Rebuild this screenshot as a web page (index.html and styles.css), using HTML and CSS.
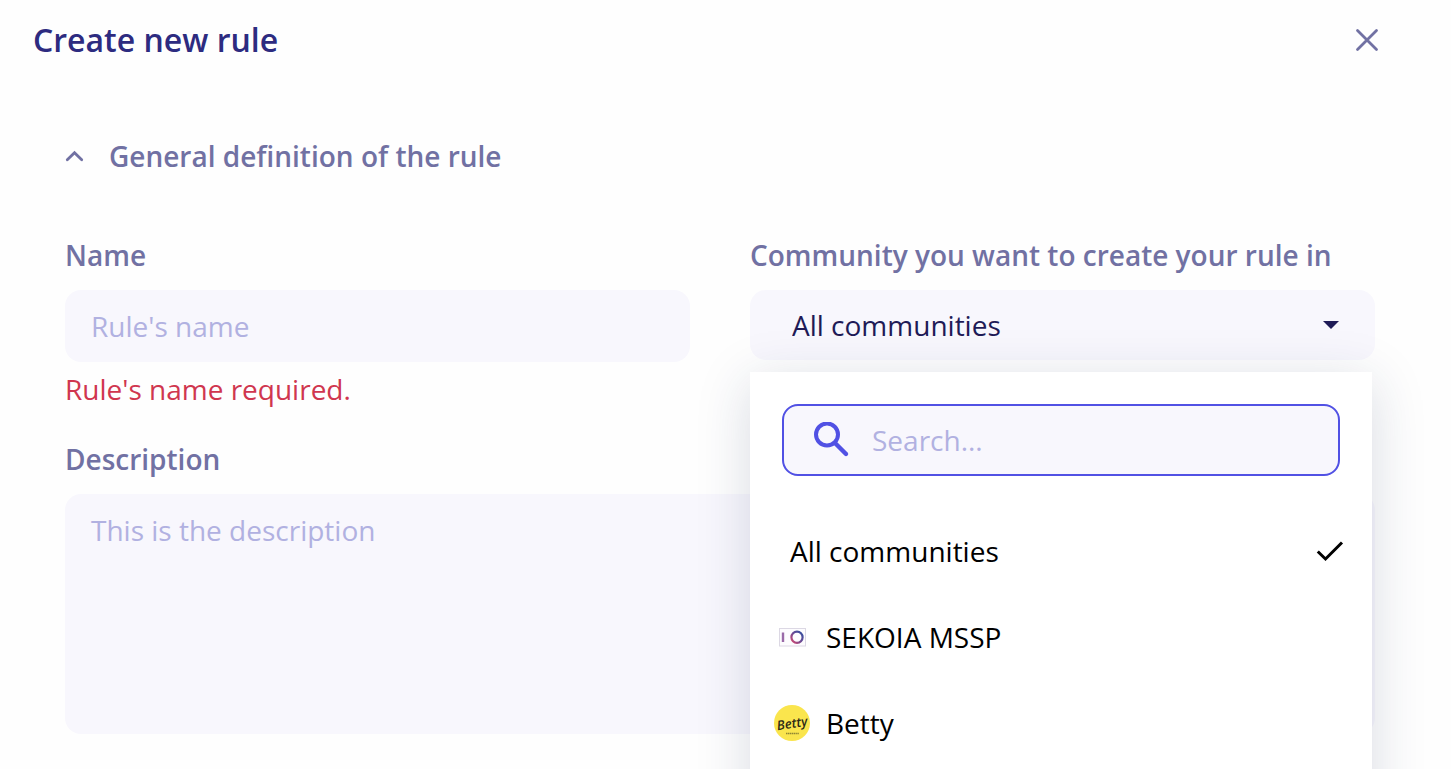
FILE: index.html
```html
<!DOCTYPE html>
<html lang="en">
<head>
<meta charset="utf-8">
<meta name="viewport" content="width=device-width, initial-scale=1">
<title>Create new rule</title>
<link rel="stylesheet" href="styles.css">
</head>
<body>
<main class="panel">
  <header class="panel-header">
    <h1 class="panel-title">Create new rule</h1>
    <button class="icon-button" type="button" aria-label="Close">
      <svg width="24" height="24" viewBox="0 0 24 24" fill="none" stroke="currentColor" stroke-width="2.8" stroke-linecap="round"><path d="M2.5 2.5 21.5 21.5M21.5 2.5 2.5 21.5"/></svg>
    </button>
  </header>

  <form class="form">
    <h2 class="section-heading">
      <button class="section-toggle" type="button" aria-expanded="true">
        <svg width="20" height="20" viewBox="0 0 20 20" fill="none" stroke="currentColor" stroke-width="2.8" stroke-linecap="round" stroke-linejoin="miter"><path d="M2.300 13.800 9.500 6.800 16.700 13.800"/></svg>
        General definition of the rule
      </button>
    </h2>

    <div class="fields">
      <div class="field">
        <label class="label" for="rule-name">Name</label>
        <input class="control" id="rule-name" type="text" placeholder="Rule's name" aria-describedby="name-error">
        <p class="error" id="name-error">Rule's name required.</p>
      </div>

      <div class="field">
        <label class="label" for="community">Community you want to create your rule in</label>
        <div class="picker">
          <select class="control picker-select" id="community">
            <option>All communities</option>
            <option>SEKOIA MSSP</option>
            <option>Betty</option>
          </select>
          <svg class="picker-arrow" width="16" height="8" viewBox="0 0 16 8" fill="currentColor"><path d="M0 0H16L8 8Z"/></svg>

          <div class="menu">
            <label class="search">
              <svg width="36" height="36" viewBox="0 0 36 36" fill="none" stroke="currentColor" stroke-width="4"><circle cx="13" cy="12.500" r="11"/><path d="M22 22 32 32" stroke-width="4.400" stroke-linecap="round"/></svg>
              <input class="search-input" type="text" placeholder="Search..." aria-label="Search communities">
            </label>
            <div class="options">
              <button class="option option-plain" type="button">
                <span class="option-name">All communities</span>
                <svg width="28" height="28" viewBox="0 0 28 28" fill="none" stroke="currentColor" stroke-width="3"><path d="M1.800 14.500 9.500 22 26 5.500"/></svg>
              </button>
              <button class="option" type="button">
                <svg width="36" height="36" viewBox="0 0 36 36" fill="none">
                  <defs>
                    <linearGradient id="ring" x1="0" y1="1" x2="1" y2="0"><stop offset="0" stop-color="#d8486f"/><stop offset=".5" stop-color="#6b4a94"/><stop offset="1" stop-color="#2f4fa0"/></linearGradient>
                  </defs>
                  <rect x="5.500" y="9.500" width="26" height="17.500" fill="#fdfcfe" stroke="#dcd8e4"/>
                  <path d="M9 13.500V23" stroke="#9a6aa8" stroke-width="2.400"/>
                  <circle cx="23" cy="18.300" r="5.600" stroke="url(#ring)" stroke-width="2.200"/>
                </svg>
                <span class="option-name">SEKOIA MSSP</span>
              </button>
              <button class="option" type="button">
                <svg width="36" height="36" viewBox="0 0 36 36" aria-hidden="true">
                  <circle cx="18" cy="18" r="18" fill="#fae54d"/>
                  <text class="betty-mark" x="18" y="23" text-anchor="middle" transform="rotate(-9 18 18)">Betty</text>
                  <path d="M12 28.500H25" fill="none" stroke="#8f8533" stroke-width="1.400" stroke-dasharray="1.400 .5"/>
                </svg>
                <span class="option-name">Betty</span>
              </button>
            </div>
          </div>
        </div>
      </div>

      <div class="field field-wide">
        <label class="label" for="description">Description</label>
        <textarea class="control description" id="description" placeholder="This is the description"></textarea>
      </div>
    </div>
  </form>
</main>
</body>
</html>
```
FILE: styles.css
```css
:root {
  --ink: #1f1b57;
  --title: #2d2b80;
  --muted: #7171a3;
  --placeholder: #b1b1e1;
  --field: #f8f7fd;
  --accent: #5151e4;
  --danger: #d0364f;
}

* {
  box-sizing: border-box;
}

body {
  margin: 0;
  background: #fefefe;
  color: var(--ink);
  font: 400 28px/40px "Open Sans", "Noto Sans", sans-serif;
}

button,
input,
select,
textarea {
  margin: 0;
  border: 0;
  background: none;
  color: inherit;
  font: inherit;
}

svg {
  display: block;
  flex: none;
}

.panel {
  height: 100vh;
  overflow: hidden;
}

.panel-header {
  display: flex;
  align-items: center;
  justify-content: space-between;
  padding: 20px 72px 0 33px;
}

.panel-title {
  margin: 0;
  color: var(--title);
  font-size: 32px;
  font-weight: 600;
  line-height: 40px;
}

.icon-button {
  padding: 0;
  color: var(--muted);
}

.form {
  padding: 76px 76px 35px 65px;
}

.section-heading {
  margin: 0 0 59px;
  font-size: 28px;
}

.section-toggle {
  display: flex;
  align-items: center;
  gap: 24px;
  padding: 0;
  color: var(--muted);
  font-weight: 600;
  line-height: 40px;
}

.fields {
  display: grid;
  grid-template-columns: 1fr 1fr;
  gap: 30px 60px;
}

.field {
  display: flex;
  flex-direction: column;
  min-width: 0;
}

.field-wide {
  grid-column: 1 / -1;
}

.label {
  margin-bottom: 15px;
  color: var(--muted);
  font-weight: 600;
}

.control {
  width: 100%;
  padding: 16px 26px;
  border-radius: 16px;
  background: var(--field);
}

::placeholder {
  color: var(--placeholder);
  opacity: 1;
}

.error {
  margin: 7px 0 0;
  color: var(--danger);
}

.description {
  display: block;
  height: 240px;
  resize: none;
}

.picker {
  position: relative;
}

.picker-select {
  display: block;
  height: 70px;
  padding: 0 42px;
  appearance: none;
}

.picker-arrow {
  position: absolute;
  top: 31px;
  right: 36px;
  pointer-events: none;
}

.menu {
  position: absolute;
  z-index: 1;
  top: calc(100% + 12px);
  left: 0;
  right: 3px;
  padding: 32px 0 60px;
  background: #fff;
  color: #000;
  box-shadow: 0 10px 50px rgba(31, 50, 90, 0.17);
}

.search {
  display: flex;
  align-items: center;
  gap: 22px;
  height: 72px;
  margin: 0 32px 32px;
  padding: 0 30px;
  border: 2px solid var(--accent);
  border-radius: 16px;
  background: var(--field);
  color: var(--accent);
}

.search-input {
  flex: 1;
  min-width: 0;
  padding: 0;
  outline: 0;
}

.options {
  display: flex;
  flex-direction: column;
}

.option {
  display: flex;
  align-items: center;
  gap: 16px;
  height: 86px;
  padding: 0 28px 0 24px;
  text-align: left;
}

.option-plain {
  padding-left: 40px;
}

.option-name {
  flex: 1;
}

.betty-mark {
  fill: #2b2a16;
  font: italic 600 13px "Open Sans", sans-serif;
}
```
